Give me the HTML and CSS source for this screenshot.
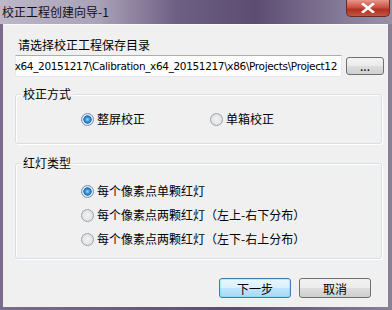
FILE: index.html
```html
<!DOCTYPE html>
<html lang="zh-CN">
<head>
    <meta charset="UTF-8">
    <title>校正工程创建向导-1</title>
    <link rel="stylesheet" href="styles.css">
</head>
<body>
    <div class="window">
        <div class="titlebar">
            <span class="title">校正工程创建向导-1</span>
            <div class="close">
                <svg width="14" height="10" viewBox="0 0 14 10">
                    <path d="M2 1 L12 9 M12 1 L2 9" stroke="#fff" stroke-width="2.6" stroke-linecap="square"/>
                </svg>
            </div>
        </div>
        <div class="client">
            <div class="label">请选择校正工程保存目录</div>
            <div class="path-row">
                <div class="path-box">
                    <span class="path-text">x64_20151217\Calibration_x64_20151217\x86\Projects\Project12</span>
                </div>
                <button class="btn browse">...</button>
            </div>

            <div class="group group-mode">
                <span class="legend">校正方式</span>
                <div class="radio-line">
                    <label class="radio checked"><span class="dot"></span>整屏校正</label>
                    <label class="radio"><span class="dot"></span>单箱校正</label>
                </div>
            </div>

            <div class="group group-light">
                <span class="legend">红灯类型</span>
                <div class="radio-list">
                    <label class="radio checked"><span class="dot"></span>每个像素点单颗红灯</label>
                    <label class="radio"><span class="dot"></span>每个像素点两颗红灯（左上-右下分布）</label>
                    <label class="radio"><span class="dot"></span>每个像素点两颗红灯（左下-右上分布）</label>
                </div>
            </div>

            <div class="actions">
                <button class="btn primary">下一步</button>
                <button class="btn">取消</button>
            </div>
        </div>
    </div>
</body>
</html>
```

FILE: styles.css
```css
body {
    margin: 0;
    font-family: "Noto Sans CJK SC", sans-serif;
    font-size: 12px;
    color: #000;
    background: #6b5c80;
}
.window {
    width: 392px;
    height: 310px;
    box-sizing: border-box;
    display: flex;
    flex-direction: column;
    background: linear-gradient(90deg, #7a6d8c 0%, #5b4d70 60%, #8a8098 100%);
    padding: 0 4px 3px 3px;
}
.titlebar {
    height: 24px;
    display: flex;
    align-items: center;
    position: relative;
    margin-left: -3px;
    margin-right: -4px;
    background: linear-gradient(90deg, #bdb7c8 0%, #aaa2b8 25%, #6e5f84 45%, #5c4c72 65%, #8a809c 90%, #9990a8 100%);
}
.title {
    padding-left: 2px;
    font-size: 12px;
    line-height: 14px;
    color: #111;
}
.close {
    position: absolute;
    top: 0;
    right: 2px;
    width: 44px;
    height: 17px;
    box-sizing: border-box;
    border: 1px solid #6a2a26;
    border-top: none;
    border-radius: 0 0 5px 5px;
    background: linear-gradient(#e5978a 0%, #cc5343 45%, #ae3123 60%, #c4553f 100%);
    display: flex;
    align-items: center;
    justify-content: center;
}
.client {
    flex: 1;
    background: #f0f0f0;
    border-top: 1px solid #fbfbfb;
    padding: 12px 4px 0 12px;
}
.label {
    padding-left: 3px;
    line-height: 16px;
}
.path-row {
    display: flex;
    align-items: center;
    margin-top: 2px;
}
.path-box {
    width: 327px;
    height: 22px;
    box-sizing: border-box;
    border: 1px solid #e3e9ef;
    border-top-color: #abadb3;
    background: #fff;
    display: flex;
    justify-content: flex-end;
    align-items: center;
    padding-right: 4px;
}
.path-text {
    font-family: "DejaVu Sans", sans-serif;
    font-size: 10.5px;
    letter-spacing: -0.35px;
    white-space: nowrap;
    color: #000;
}
.btn {
    font-family: "Noto Sans CJK SC", sans-serif;
    font-size: 12px;
    height: 20px;
    padding: 0;
    border: 1px solid #707070;
    border-radius: 3px;
    background: linear-gradient(#f2f2f2 0%, #ebebeb 50%, #dddddd 51%, #cfcfcf 100%);
    color: #000;
}
.browse {
    width: 39px;
    height: 18px;
    margin-left: 4px;
    line-height: 10px;
}
.group {
    position: relative;
    border: 1px solid #d5dfe5;
    border-radius: 3px;
    box-shadow: inset 1px 1px 0 #fff, 1px 1px 0 #fff;
    margin-right: 2px;
}
.legend {
    position: absolute;
    top: -8px;
    left: 5px;
    padding: 0 2px;
    background: #f0f0f0;
    line-height: 14px;
}
.group-mode {
    margin-top: 17px;
    height: 50px;
    box-sizing: border-box;
}
.radio-line {
    display: flex;
    padding: 16px 0 0 65px;
    gap: 65px;
}
.group-light {
    margin-top: 19px;
    height: 96px;
    box-sizing: border-box;
}
.radio-list {
    display: flex;
    flex-direction: column;
    gap: 8px;
    padding: 19px 0 0 65px;
}
.radio {
    display: flex;
    align-items: center;
    gap: 3px;
    line-height: 16px;
    white-space: nowrap;
}
.dot {
    width: 11px;
    height: 11px;
    border-radius: 50%;
    border: 1px solid #9aa3ad;
    background: radial-gradient(circle, #f4f4f4 0%, #d9d9d9 100%);
}
.radio.checked .dot {
    border-color: #6d8fae;
    background: radial-gradient(circle, #8ed0ff 0%, #2b8bd6 35%, #1c5c9c 50%, #dfe7ef 56%, #f4f6f8 100%);
}
.actions {
    display: flex;
    justify-content: flex-end;
    gap: 8px;
    margin-top: 19px;
    padding-right: 13px;
}
.actions .btn {
    width: 72px;
}
.btn.primary {
    border-color: #3c7fb1;
    background: linear-gradient(#eaf6fd 0%, #d9f0fc 50%, #bee6fd 51%, #a7d9f5 100%);
    box-shadow: inset 0 0 0 1px #48d6fb55;
}
```
